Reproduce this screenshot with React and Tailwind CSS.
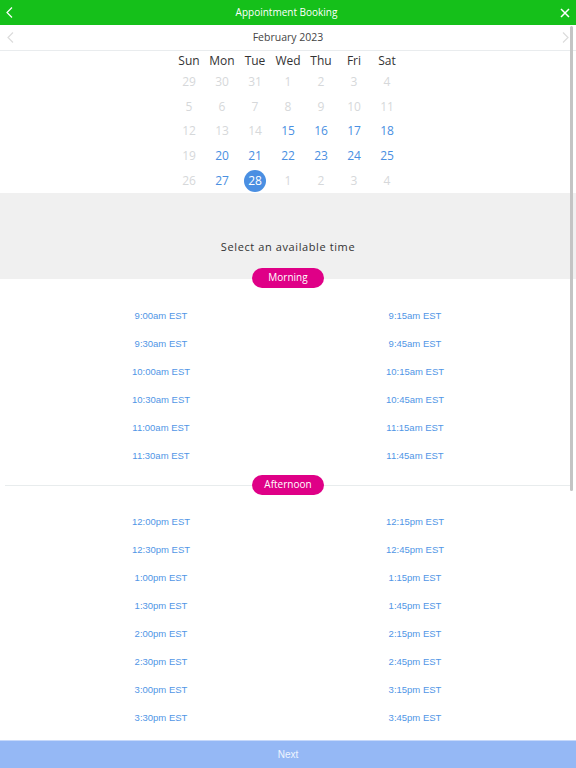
import React from 'react';

const weeks = [
  [[29, 0], [30, 0], [31, 0], [1, 0], [2, 0], [3, 0], [4, 0]],
  [[5, 0], [6, 0], [7, 0], [8, 0], [9, 0], [10, 0], [11, 0]],
  [[12, 0], [13, 0], [14, 0], [15, 1], [16, 1], [17, 1], [18, 1]],
  [[19, 0], [20, 1], [21, 1], [22, 1], [23, 1], [24, 1], [25, 1]],
  [[26, 0], [27, 1], [28, 2], [1, 0], [2, 0], [3, 0], [4, 0]],
];

const days = ['Sun', 'Mon', 'Tue', 'Wed', 'Thu', 'Fri', 'Sat'];

const morning = [
  ['9:00am EST', '9:15am EST'],
  ['9:30am EST', '9:45am EST'],
  ['10:00am EST', '10:15am EST'],
  ['10:30am EST', '10:45am EST'],
  ['11:00am EST', '11:15am EST'],
  ['11:30am EST', '11:45am EST'],
];

const afternoon = [
  ['12:00pm EST', '12:15pm EST'],
  ['12:30pm EST', '12:45pm EST'],
  ['1:00pm EST', '1:15pm EST'],
  ['1:30pm EST', '1:45pm EST'],
  ['2:00pm EST', '2:15pm EST'],
  ['2:30pm EST', '2:45pm EST'],
  ['3:00pm EST', '3:15pm EST'],
  ['3:30pm EST', '3:45pm EST'],
];

function Chevron({ left, color, className }) {
  return (
    <svg width="7" height="11" viewBox="0 0 7 11" className={className}>
      <polyline
        points={left ? '6,0.5 1,5.5 6,10.5' : '1,0.5 6,5.5 1,10.5'}
        fill="none"
        stroke={color}
        strokeWidth="1.2"
      />
    </svg>
  );
}

function Pill({ label }) {
  return (
    <div className="relative z-10 h-[20px] w-[72px] rounded-full bg-[#df0087] flex items-center justify-center text-white text-[10px] font-['Open_Sans',sans-serif]">
      {label}
    </div>
  );
}

function Slots({ rows }) {
  return (
    <div className="mx-[34px] font-['Liberation_Sans',Arial,sans-serif] text-[9.5px] text-[#5196e6]">
      {rows.map((r) => (
        <div key={r[0]} className="grid grid-cols-2 h-[28px] items-center">
          <div className="text-center">{r[0]}</div>
          <div className="text-center">{r[1]}</div>
        </div>
      ))}
    </div>
  );
}

export default function App() {
  return (
    <div className="relative w-[576px] h-[768px] overflow-hidden bg-white font-['Open_Sans',sans-serif]">
      {/* Header */}
      <div className="h-[25px] bg-[#15c01a] flex items-center justify-between px-[6px]">
        <Chevron left color="#ffffff" />
        <div className="text-white text-[10px] font-medium">Appointment Booking</div>
        <svg width="10" height="10" viewBox="0 0 10 10">
          <path d="M1 1 L9 9 M9 1 L1 9" stroke="#ffffff" strokeWidth="1.5" />
        </svg>
      </div>

      {/* Month nav */}
      <div className="h-[26px] border-b border-[#e9ecee] flex items-center justify-between px-[7px]">
        <Chevron left color="#dcdcdc" />
        <div className="text-[10.5px] text-[#444]">February 2023</div>
        <Chevron color="#dcdcdc" />
      </div>

      {/* Calendar */}
      <div className="w-[231px] mx-auto text-[12px] pt-px">
        <div className="grid grid-cols-7 h-[18px] items-center text-[#333]">
          {days.map((d) => (
            <div key={d} className="text-center">{d}</div>
          ))}
        </div>
        {weeks.map((w, i) => (
          <div key={i} className="grid grid-cols-7 h-[24.6px] items-center">
            {w.map(([n, s], j) => (
              <div key={j} className="flex justify-center">
                {s === 2 ? (
                  <div className="w-[22px] h-[22px] rounded-full bg-[#4a8fe2] text-white flex items-center justify-center">
                    {n}
                  </div>
                ) : (
                  <span className={s ? 'text-[#4a90e2]' : 'text-[#d6d8da]'}>{n}</span>
                )}
              </div>
            ))}
          </div>
        ))}
      </div>

      {/* Select time */}
      <div className="bg-[#f0f0f0] h-[86px] pt-[46px] text-center">
        <div className="text-[11px] leading-[16px] tracking-[0.6px] text-[#333]">Select an available time</div>
      </div>
      <div className="-mt-[11px] flex justify-center">
        <Pill label="Morning" />
      </div>

      <div className="mt-[14px]">
        <Slots rows={morning} />
      </div>

      <div className="mt-[5px] relative flex justify-center items-center h-[20px]">
        <div className="absolute left-[5px] right-[5px] top-[10px] h-px bg-[#e8eced]" />
        <Pill label="Afternoon" />
      </div>

      <div className="mt-[13px]">
        <Slots rows={afternoon} />
      </div>

      {/* Next */}
      <div className="absolute left-0 right-0 bottom-0 h-[28px] bg-[#95b8f5] border-t border-[#c7d9fa] flex items-center justify-center text-white/85 text-[10px] font-['Liberation_Sans',Arial,sans-serif]">
        Next
      </div>

      {/* scrollbar thumb */}
      <div className="absolute right-[3px] top-[26px] w-[3px] h-[465px] bg-[#c4c4c4] rounded-full" />
    </div>
  );
}
